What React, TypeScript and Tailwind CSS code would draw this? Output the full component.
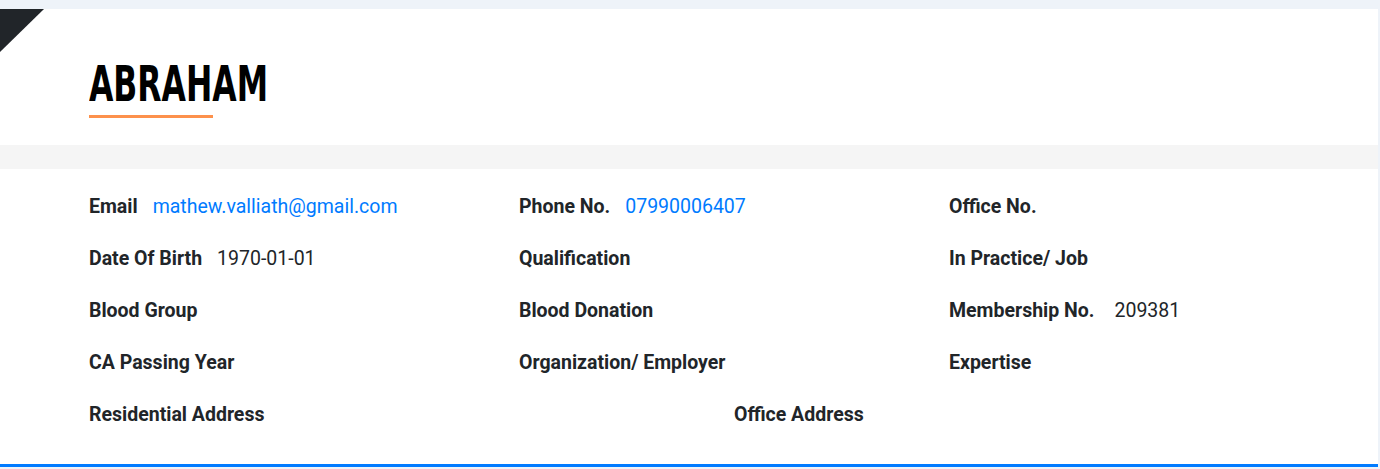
import React from "react";

type Item = { label: string; value?: string; link?: boolean; gap?: string };

const rows: Item[][] = [
  [
    { label: "Email", value: "mathew.valliath@gmail.com", link: true, gap: "ml-[15px]" },
    { label: "Phone No.", value: "07990006407", link: true, gap: "ml-[15px]" },
    { label: "Office No." },
  ],
  [
    { label: "Date Of Birth", value: "1970-01-01", gap: "ml-[15px]" },
    { label: "Qualification" },
    { label: "In Practice/ Job" },
  ],
  [
    { label: "Blood Group" },
    { label: "Blood Donation" },
    { label: "Membership No.", value: "209381", gap: "ml-[20px]" },
  ],
  [
    { label: "CA Passing Year" },
    { label: "Organization/ Employer" },
    { label: "Expertise" },
  ],
];

function Field({ item }: { item: Item }) {
  return (
    <div className="flex items-center h-[52px] whitespace-nowrap">
      <span className="font-bold text-[#212529]">{item.label}</span>
      {item.value && (
        <span
          className={`${item.gap ?? "ml-[16px]"} ${
            item.link ? "text-[#007bff]" : "text-[#212529]"
          }`}
        >
          {item.value}
        </span>
      )}
    </div>
  );
}

export default function App() {
  return (
    <div
      className="w-[1380px] h-[469px] bg-[#eef3f9] pt-[9px] overflow-hidden"
      style={{ fontFamily: "Roboto, 'Noto Sans', sans-serif" }}
    >
      <div className="w-[1378px] bg-white border-b-[3px] border-[#007bff] h-[458px] relative">
        <div className="absolute left-0 top-0 w-0 h-0 border-t-[43px] border-t-[#212529] border-r-[44px] border-r-transparent" />
        <div className="h-[136px] pl-[89px] pt-[48px]">
          <h1
            className="text-[50px] leading-[54px] font-bold text-black uppercase origin-left scale-x-[0.7] inline-block align-top"
            style={{ fontFamily: "'DejaVu Sans Condensed', sans-serif" }}
          >
            Abraham
          </h1>
          <div className="w-[124px] h-[3px] bg-[#fd914c] mt-[4px]" />
        </div>
        <div className="h-[24px] bg-[#f5f5f5]" />
        <div className="pl-[89px] pt-[11px] text-[19.5px] leading-[27px]">
          {rows.map((r, i) => (
            <div key={i} className="grid grid-cols-[430px_430px_430px]">
              {r.map((it, j) => (
                <Field key={j} item={it} />
              ))}
            </div>
          ))}
          <div className="grid grid-cols-[645px_645px]">
            <Field item={{ label: "Residential Address" }} />
            <Field item={{ label: "Office Address" }} />
          </div>
        </div>
      </div>
    </div>
  );
}
